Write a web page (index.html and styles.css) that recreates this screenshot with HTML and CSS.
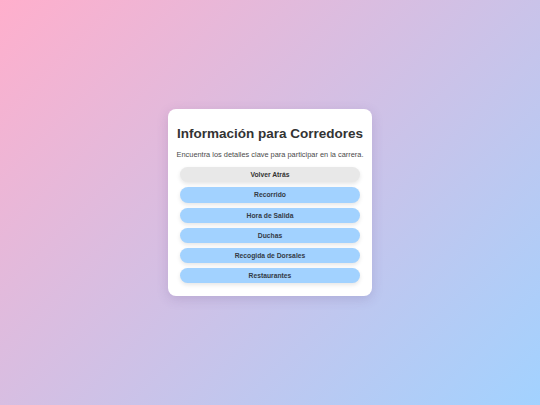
FILE: index.html
```html
<!DOCTYPE html>
<html lang="es">
<head>
<meta charset="utf-8">
<title>Información para Corredores</title>
<link rel="stylesheet" href="styles.css">
</head>
<body>
<main class="card">
  <h1 class="title">Información para Corredores</h1>
  <p class="subtitle">Encuentra los detalles clave para participar en la carrera.</p>
  <nav class="menu">
    <button class="btn btn-back">Volver Atrás</button>
    <button class="btn">Recorrido</button>
    <button class="btn">Hora de Salida</button>
    <button class="btn">Duchas</button>
    <button class="btn">Recogida de Dorsales</button>
    <button class="btn">Restaurantes</button>
  </nav>
</main>
</body>
</html>
```

FILE: styles.css
```css
html, body {
  margin: 0;
  padding: 0;
  height: 100%;
}
body {
  font-family: "Liberation Sans", Arial, sans-serif;
  background: linear-gradient(135deg, #ffafcc 0%, #a2d2ff 100%);
  display: flex;
  align-items: center;
  justify-content: center;
  min-height: 405px;
}
.card {
  width: 204px;
  box-sizing: border-box;
  background: #ffffff;
  border-radius: 8px;
  padding: 17px 12px 13px;
  box-shadow: 0 3px 12px rgba(90, 60, 120, 0.18);
  text-align: center;
}
.title {
  margin: 0 -12px 8px;
  font-size: 13.5px;
  line-height: 16px;
  font-weight: bold;
  color: #333333;
  white-space: nowrap;
}
.subtitle {
  margin: 0 -12px 8.5px;
  font-size: 7.4px;
  line-height: 9px;
  color: #4a4a4a;
  white-space: nowrap;
}
.menu {
  display: flex;
  flex-direction: column;
  gap: 5px;
}
.btn {
  display: block;
  width: 100%;
  height: 15.2px;
  padding: 0;
  border: none;
  border-radius: 8px;
  background: #a2d2ff;
  color: #333a45;
  font-family: "Liberation Sans", Arial, sans-serif;
  font-size: 6.75px;
  font-weight: bold;
  line-height: 15.2px;
  box-shadow: 0 2px 4px rgba(0, 0, 0, 0.1);
}
.btn-back {
  background: #e8e8e8;
  color: #333333;
}
```
